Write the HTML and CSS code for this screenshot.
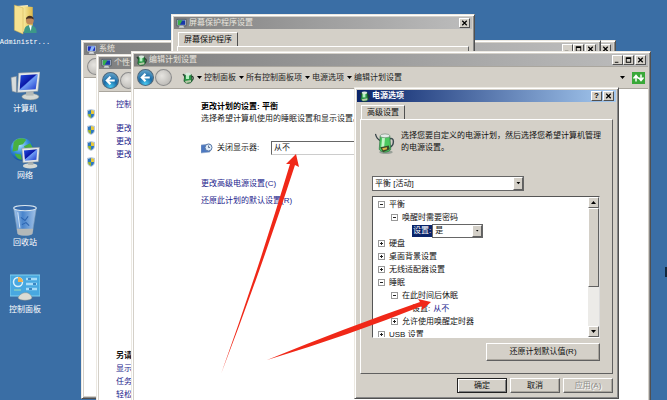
FILE: index.html
```html
<!DOCTYPE html>
<html lang="zh-CN">
<head>
  <meta charset="UTF-8">
  <meta name="viewport" content="width=device-width, initial-scale=1.0">
  <title>电源选项</title>
  <link rel="stylesheet" href="styles.css">
</head>
<body>
  <!-- Shared icons -->
  <svg class="defs" aria-hidden="true">
    <defs>
      <linearGradient id="screen" x1="0" y1="0" x2="1" y2="1">
        <stop offset="0" stop-color="#2450e0"/>
        <stop offset=".45" stop-color="#0a18a8"/>
        <stop offset=".5" stop-color="#6f9cf5"/>
        <stop offset="1" stop-color="#1733c8"/>
      </linearGradient>
      <linearGradient id="folder" x1="0" y1="0" x2="1" y2="0">
        <stop offset="0" stop-color="#fbf0a8"/>
        <stop offset="1" stop-color="#dcb848"/>
      </linearGradient>
      <radialGradient id="globe" cx=".4" cy=".3" r=".8">
        <stop offset="0" stop-color="#a8e4ff"/>
        <stop offset=".5" stop-color="#3088d8"/>
        <stop offset="1" stop-color="#0c3c88"/>
      </radialGradient>
      <radialGradient id="orb" cx=".5" cy=".9" r=".9">
        <stop offset="0" stop-color="#48c8f0"/>
        <stop offset=".5" stop-color="#1a6ca8"/>
        <stop offset="1" stop-color="#6aa8cc"/>
      </radialGradient>
      <radialGradient id="orb-off" cx=".4" cy=".4" r=".7">
        <stop offset="0" stop-color="#e6e4e0"/>
        <stop offset="1" stop-color="#b8b6b2"/>
      </radialGradient>
      <linearGradient id="glass" x1="0" y1="0" x2="1" y2="0">
        <stop offset="0" stop-color="#a8c8ec"/>
        <stop offset=".4" stop-color="#4884cc"/>
        <stop offset="1" stop-color="#a4c4e8"/>
      </linearGradient>
    </defs>
    <symbol id="i-monitor" viewBox="0 0 28 27">
      <path d="M1 5l5-1v15l-4-1z" fill="#d8dcdc" stroke="#7c8890" stroke-width=".5"/>
      <ellipse cx="19" cy="23" rx="8" ry="3" fill="#d4d8d4" stroke="#808888" stroke-width=".5"/>
      <path d="M15 17h7v5h-7z" fill="#b4bab8"/>
      <path d="M8 1l20-1-2 18-19 1z" fill="#e4e8e8" stroke="#8c9498" stroke-width=".5"/>
      <path d="M10 3l16-1-2 14-15 1z" fill="url(#screen)"/>
    </symbol>
    <symbol id="i-pc" viewBox="0 0 12 11">
      <path d="M1 1h10v7H1z" fill="#e8ecf0" stroke="#405060" stroke-width=".6"/>
      <path d="M2 2h8v5H2z" fill="#1a30c0"/>
      <path d="M6 2h4L7 7H4z" fill="#8cb4f8"/>
      <path d="M4 8h4l1 2H3z" fill="#d8dce0"/>
    </symbol>
    <symbol id="i-pc-green" viewBox="0 0 12 11">
      <path d="M1 1h10v7H1z" fill="#e8ecf0" stroke="#304050" stroke-width=".8"/>
      <path d="M2 2h8v5H2z" fill="#1838a8"/>
      <path d="M2 2h5L4 7H2z" fill="#38b048"/>
      <path d="M4 8h4l1 2H3z" fill="#c8d0d0"/>
    </symbol>
    <symbol id="i-power" viewBox="0 0 20 24">
      <ellipse cx="11" cy="21" rx="7" ry="2" fill="#98a098"/>
      <path d="M15 7c5-2 5 7 0 9" fill="none" stroke="#3c4c50" stroke-width="1.5"/>
      <path d="M0 2c1 4 3 6 5 7" fill="none" stroke="#384448" stroke-width="1.3"/>
      <path d="M5 4h10l1 14c-2 4-10 4-12 0z" fill="#4cc860" stroke="#2c7040" stroke-width=".7"/>
      <path d="M7 6h3l-1 11H6z" fill="#c4f4c8"/>
      <ellipse cx="10" cy="4" rx="5" ry="2" fill="#e4ece8" stroke="#688070" stroke-width=".6"/>
      <path d="M5 16l9-2 1 4-7 3z" fill="#394c2c"/>
      <path d="M7 17l5-1v2l-4 1z" fill="#dcb448"/>
    </symbol>
    <symbol id="i-power-small" viewBox="0 0 12 12">
      <path d="M1 2l2 3M9 4c3 0 3 4 0 5" fill="none" stroke="#203828" stroke-width="1.2"/>
      <path d="M3 2h6l1 7c-1 3-7 3-8 0z" fill="#2c9848" stroke="#184c28" stroke-width=".8"/>
      <path d="M4 3h3v4H4z" fill="#b4f0c0"/>
      <ellipse cx="6" cy="2" rx="3" ry="1.500" fill="#d8e8dc"/>
      <path d="M3 9l6-1v2l-5 1z" fill="#b8c8a8"/>
    </symbol>
    <symbol id="i-shield" viewBox="0 0 8 10">
      <path d="M4 0l4 1v4c0 3-2 4-4 5C2 9 0 8 0 5V1z" fill="#b8c8dc"/>
      <path d="M4 1v4H1V2z" fill="#2c78c0"/>
      <path d="M4 1v4h3V2z" fill="#e8c838"/>
      <path d="M4 5v4C2 8 1 7 1 5z" fill="#98b428"/>
      <path d="M4 5v4c2-1 3-2 3-4z" fill="#2c78c0"/>
    </symbol>
    <symbol id="i-back" viewBox="0 0 16 16">
      <circle cx="8" cy="8" r="7.5" fill="url(#orb)" stroke="#50687c"/>
      <path d="M12 8H5M8 4.500L4.500 8 8 11.500" fill="none" stroke="#fff" stroke-width="2"/>
    </symbol>
    <symbol id="i-forward" viewBox="0 0 16 16">
      <circle cx="8" cy="8" r="7.500" fill="url(#orb-off)" stroke="#8c8c8c"/>
    </symbol>
    <symbol id="i-min" viewBox="0 0 10 8"><path d="M2 6h4v1H2z"/></symbol>
    <symbol id="i-max" viewBox="0 0 10 8"><path d="M2 1h6v6H2zM3 3v3h4V3z" fill-rule="evenodd"/></symbol>
    <symbol id="i-close" viewBox="0 0 10 8"><path d="M2.500 1.500l5 5M7.500 1.500l-5 5" stroke="#000" stroke-width="1.300"/></symbol>
    <symbol id="i-down" viewBox="0 0 6 4"><path d="M1 0h5L3.500 3z"/></symbol>
    <symbol id="i-up" viewBox="0 0 6 4"><path d="M1 3h5L3.500 0z"/></symbol>
  </svg>

  <!-- Desktop icons -->
  <nav class="desktop">
    <a href="#admin" class="shortcut">
      <svg class="shortcut-icon" viewBox="0 0 28 32">
        <path d="M5 2l12-1v26H5z" fill="#f8ecc0"/>
        <path d="M11 2l11 1v23l-11 3z" fill="url(#folder)"/>
        <path d="M3 1l9 3v27l-9-4z" fill="#f6e290" stroke="#c8a848" stroke-width=".5"/>
        <circle cx="19" cy="17" r="4" fill="#c08858"/>
        <path d="M15 16c0-5 8-5 8 0l-2-1h-4z" fill="#443020"/>
        <path d="M13 30c0-6 2-8 6-8s7 2 7 8z" fill="#3c9888"/>
        <path d="M18 22h3l-1 6z" fill="#fff"/>
      </svg>
      <span class="latin">Administr...</span>
    </a>
    <a href="#computer" class="shortcut">
      <svg class="shortcut-icon"><use href="#i-monitor"/></svg>
      <span>计算机</span>
    </a>
    <a href="#network" class="shortcut">
      <svg class="shortcut-icon" viewBox="0 0 28 30">
        <circle cx="11" cy="11" r="11" fill="url(#globe)"/>
        <path d="M3 4c4-5 11-4 12-2l-3 4-4 1-1 5-5 1zM13 8l6-3 3 5-7 3zM4 15l6 1 1 5c-4 0-6-3-7-6z" fill="#48b040"/>
        <ellipse cx="19" cy="27" rx="7" ry="2.500" fill="#d4d8d4"/>
        <path d="M17 22h5v4h-5z" fill="#a8b0b0"/>
        <path d="M11 10l17-1-1 14-15 1z" fill="#e4e8e8" stroke="#808890" stroke-width=".5"/>
        <path d="M13 12l13-1-1 10-11 1z" fill="url(#screen)"/>
      </svg>
      <span>网络</span>
    </a>
    <a href="#recycle" class="shortcut">
      <svg class="shortcut-icon" viewBox="0 0 28 30">
        <path d="M3 3h22l-4 25c-3 2-11 2-14 0z" fill="url(#glass)" stroke="#7898b8" stroke-width=".6"/>
        <path d="M6 23h16l-1 5c-3 2-11 2-14 0z" fill="#b4b8b8"/>
        <ellipse cx="14" cy="3" rx="11" ry="2.500" fill="#3468a8" stroke="#dce8f0"/>
        <path d="M10 12l4 3 3-4M11 19l4-2 3 3" fill="none" stroke="#2c64b0"/>
        <path d="M7 7l2 15" stroke="#d0e4f8"/>
      </svg>
      <span>回收站</span>
    </a>
    <a href="#control" class="shortcut">
      <svg class="shortcut-icon" viewBox="0 0 30 27">
        <path d="M0 1h30v21H0z" fill="#48a8e0" stroke="#80d0f0"/>
        <circle cx="8" cy="8" r="4.500" fill="none" stroke="#d8f0fc" stroke-width="1.500"/>
        <path d="M8 8V3a5 5 0 0 1 5 5z" fill="#f0b050"/>
        <path d="M16 5h11M16 10h11M16 15h11" stroke="#a8dcf8" stroke-width="2.500"/>
        <path d="M18 5h3M23 10h3M19 15h3" stroke="#1868b0" stroke-width="1.500"/>
        <path d="M4 16h7" stroke="#a0e0b0"/>
        <path d="M8 24c2-6 12-8 14 0-2 3-12 3-14 0z" fill="#dcdcd4" stroke="#88908c" stroke-width=".5"/>
      </svg>
      <span>控制面板</span>
    </a>
  </nav>
  <div class="edge-mark"></div>

  <section class="window window-saver">
    <header class="titlebar">
      <svg class="title-icon"><use href="#i-pc-green"/></svg>
      <span class="title">屏幕保护程序设置</span>
      <button class="cap" aria-label="关闭"><svg><use href="#i-close"/></svg></button>
    </header>
    <div class="tabs"><button class="tab">屏幕保护程序</button></div>
    <div class="tab-panel"></div>
  </section>

  <section class="window window-back">
    <header class="titlebar">
      <span class="title"></span>
      <button class="cap" aria-label="关闭"><svg><use href="#i-close"/></svg></button>
    </header>
  </section>

  <section class="window window-system">
    <header class="titlebar">
      <svg class="title-icon"><use href="#i-pc"/></svg>
      <span class="title">系统</span>
      <button class="cap" aria-label="最小化"><svg><use href="#i-min"/></svg></button>
      <button class="cap" aria-label="最大化"><svg><use href="#i-max"/></svg></button>
      <button class="cap" aria-label="关闭"><svg><use href="#i-close"/></svg></button>
    </header>
    <div class="navbar">
      <svg class="orb"><use href="#i-forward"/></svg>
    </div>
    <div class="content shields">
      <svg><use href="#i-shield"/></svg>
      <svg><use href="#i-shield"/></svg>
      <svg><use href="#i-shield"/></svg>
      <svg><use href="#i-shield"/></svg>
    </div>
  </section>

  <section class="window window-personal">
    <header class="titlebar">
      <svg class="title-icon"><use href="#i-pc-green"/></svg>
      <span class="title">个性化</span>
    </header>
    <div class="navbar">
      <svg class="orb"><use href="#i-back"/></svg>
      <svg class="orb"><use href="#i-forward"/></svg>
    </div>
    <div class="content sidebar">
      <div class="side-links">
        <a href="#home" class="side-home">控制面板主页</a>
        <a href="#icons">更改桌面图标</a>
        <a href="#pointer">更改鼠标指针</a>
        <a href="#picture">更改帐户图片</a>
      </div>
      <div class="side-links">
        <strong>另请参阅</strong>
        <a href="#display">显示</a>
        <a href="#taskbar">任务栏</a>
        <a href="#ease">轻松访问中心</a>
      </div>
    </div>
  </section>

  <section class="window window-plan">
    <header class="titlebar">
      <svg class="title-icon"><use href="#i-power-small"/></svg>
      <span class="title">编辑计划设置</span>
      <button class="cap" aria-label="最小化"><svg><use href="#i-min"/></svg></button>
      <button class="cap" aria-label="最大化"><svg><use href="#i-max"/></svg></button>
      <button class="cap" aria-label="关闭"><svg><use href="#i-close"/></svg></button>
    </header>
    <div class="navbar">
      <svg class="orb"><use href="#i-back"/></svg>
      <svg class="orb"><use href="#i-forward"/></svg>
      <div class="address">
        <svg class="address-icon"><use href="#i-power-small"/></svg>
        <svg class="arrow"><use href="#i-down"/></svg>
        <a href="#cp">控制面板</a>
        <svg class="arrow"><use href="#i-down"/></svg>
        <a href="#all">所有控制面板项</a>
        <svg class="arrow"><use href="#i-down"/></svg>
        <a href="#power">电源选项</a>
        <svg class="arrow"><use href="#i-down"/></svg>
        <a href="#edit">编辑计划设置</a>
      </div>
      <svg class="arrow"><use href="#i-down"/></svg>
      <button class="refresh" aria-label="刷新">
        <svg viewBox="0 0 13 11"><path d="M4 9V4M1.500 6L4 3l2.500 3M9 2v5M6.500 5L9 8l2.500-3" fill="none" stroke="#fff" stroke-width="1.500"/></svg>
      </button>
    </div>
    <main class="content plan">
      <h1>更改计划的设置: 平衡</h1>
      <p>选择希望计算机使用的睡眠设置和显示设置。</p>
      <div class="plan-row">
        <svg class="plan-icon" viewBox="0 0 12 11">
          <path d="M0 2l9-1v8l-9 1z" fill="#4c78c0" stroke="#90a8c8" stroke-width=".6"/>
          <circle cx="7.500" cy="4.500" r="3.500" fill="#e0ecf8" stroke="#5878a8"/>
          <path d="M7.500 2.500v2H9" fill="none" stroke="#304870" stroke-width=".7"/>
        </svg>
        <label for="display-off">关闭显示器:</label>
        <select id="display-off"><option>从不</option></select>
      </div>
      <a href="#advanced">更改高级电源设置(C)</a>
      <a href="#restore">还原此计划的默认设置(R)</a>
    </main>
  </section>

  <section class="window window-dialog">
    <header class="titlebar active">
      <svg class="title-icon"><use href="#i-power-small"/></svg>
      <span class="title">电源选项</span>
      <button class="cap help" aria-label="帮助">?</button>
      <button class="cap" aria-label="关闭"><svg><use href="#i-close"/></svg></button>
    </header>
    <div class="tabs"><button class="tab">高级设置</button></div>
    <div class="tab-panel">
      <div class="intro">
        <svg class="intro-icon"><use href="#i-power"/></svg>
        <p>选择您要自定义的电源计划，然后选择您希望计算机管理的电源设置。</p>
      </div>
      <div class="combo plan-combo">
        <select aria-label="电源计划"><option>平衡 [活动]</option></select>
        <svg><use href="#i-down"/></svg>
      </div>
      <div class="tree-box">
        <ul class="tree">
          <li><button class="toggle open" aria-label="折叠"></button>平衡</li>
          <li class="level-2"><button class="toggle open" aria-label="折叠"></button>唤醒时需要密码</li>
          <li class="level-3">
            <label class="selected" for="wake">设置:</label>
            <div class="combo">
              <select id="wake"><option>是</option></select>
              <svg><use href="#i-down"/></svg>
            </div>
          </li>
          <li><button class="toggle" aria-label="展开"></button>硬盘</li>
          <li><button class="toggle" aria-label="展开"></button>桌面背景设置</li>
          <li><button class="toggle" aria-label="展开"></button>无线适配器设置</li>
          <li><button class="toggle open" aria-label="折叠"></button>睡眠</li>
          <li class="level-2"><button class="toggle open" aria-label="折叠"></button>在此时间后休眠</li>
          <li class="level-3"><span class="setting">设置:</span><a href="#never">从不</a></li>
          <li class="level-2"><button class="toggle" aria-label="展开"></button>允许使用唤醒定时器</li>
          <li><button class="toggle" aria-label="展开"></button>USB 设置</li>
        </ul>
        <div class="scrollbar">
          <button aria-label="向上"><svg><use href="#i-up"/></svg></button>
          <div class="thumb"></div>
          <button class="scroll-down" aria-label="向下"><svg><use href="#i-down"/></svg></button>
        </div>
      </div>
      <button class="btn restore">还原计划默认值(R)</button>
    </div>
    <footer class="buttons">
      <button class="btn default">确定</button>
      <button class="btn">取消</button>
      <button class="btn" disabled>应用(A)</button>
    </footer>
  </section>

  <!-- Red pointers drawn over the windows -->
  <svg class="pointers" width="667" height="400" viewBox="0 0 667 400">
    <path d="M221 374Q259 268 290 164l-4 0 10-10 3 13-4-2Q261 270 221 374z"/>
    <path d="M267 360Q345 328 420 302l-2-3 13 3-9 8 0-4Q350 335 267 360z"/>
  </svg>
</body>
</html>
```

FILE: styles.css
```css
* {
  box-sizing: border-box;
}

body {
  margin: 0;
  height: 100vh;
  position: relative;
  overflow: hidden;
  background: #3a6ea5;
  color: #111;
  font-family: 'Liberation Sans', 'Noto Sans CJK SC', sans-serif;
  font-size: 8px;
  line-height: 12px;
}

button, select {
  font: inherit;
  color: inherit;
  margin: 0;
  padding: 0;
  border-radius: 0;
}

select {
  appearance: none;
  background: #fff;
  border: 0;
  outline: 0;
}

a {
  color: #1c1c8c;
  text-decoration: none;
}

h1, p, ul {
  margin: 0;
  padding: 0;
}

svg {
  display: block;
  flex: none;
}

.defs {
  position: absolute;
  width: 0;
  height: 0;
}

/* Desktop */
.desktop {
  width: 50px;
  padding-top: 4px;
  display: flex;
  flex-direction: column;
}

.shortcut {
  height: 67px;
  display: flex;
  flex-direction: column;
  align-items: center;
  gap: 1px;
  color: #fff;
  white-space: nowrap;
}

.shortcut-icon {
  width: 30px;
  height: 31px;
}

.latin {
  font-family: 'Liberation Mono', monospace;
  font-size: 7px;
}

.edge-mark {
  position: absolute;
  right: 0;
  top: 267px;
  width: 2px;
  height: 10px;
  background: #102840;
}

/* Windows */
.window {
  position: absolute;
  display: flex;
  flex-direction: column;
  padding: 2px;
  background: #d4d0c8;
  border: 1px solid;
  border-color: #ece9e2 #505050 #505050 #ece9e2;
  box-shadow: inset 1px 1px #fff, inset -1px -1px #888;
  white-space: nowrap;
}

.window-saver {
  left: 171px;
  top: 14px;
  width: 304px;
  height: 200px;
  z-index: 1;
}

.window-back {
  left: 300px;
  top: 40px;
  width: 316px;
  height: 300px;
}

.window-system {
  left: 81px;
  top: 40px;
  width: 520px;
  bottom: 1px;
}

.window-personal {
  left: 96px;
  top: 54px;
  width: 500px;
  bottom: -4px;
  z-index: 2;
}

.window-plan {
  left: 131px;
  top: 51px;
  right: 16px;
  bottom: -4px;
  z-index: 2;
}

.window-dialog {
  left: 354px;
  top: 87px;
  width: 265px;
  z-index: 2;
}

.titlebar {
  display: flex;
  align-items: center;
  height: 12px;
  flex: none;
  padding: 0 2px;
  background: linear-gradient(to right, #808080, #bdbdbd);
  color: #e8e5de;
}

.titlebar.active {
  background: linear-gradient(to right, #0a246a, #a6caf0);
  color: #fff;
  font-weight: bold;
}

.title-icon {
  width: 11px;
  height: 11px;
  margin-right: 2px;
}

.title {
  flex: 1;
}

.cap {
  width: 11px;
  height: 10px;
  background: #d4d0c8;
  border: 1px solid;
  border-color: #fff #505050 #505050 #fff;
  color: #000;
  font-weight: bold;
  line-height: 8px;
}

.cap:last-child {
  margin-left: 1px;
}

.cap svg {
  width: 9px;
  height: 8px;
}

.navbar {
  display: flex;
  align-items: center;
  height: 23px;
  flex: none;
  padding: 0 3px;
  gap: 1px;
  border-bottom: 1px solid #aaa69e;
}

.window-plan .navbar {
  border-top: 1px solid #aaa69e;
}

.orb {
  width: 17px;
  height: 17px;
}

.address {
  flex: 1;
  display: flex;
  align-items: center;
  gap: 2px;
  margin-left: 9px;
}

.address a {
  color: #222;
}

.address-icon {
  width: 12px;
  height: 12px;
}

.arrow {
  width: 6px;
  height: 4px;
}

.refresh {
  width: 13px;
  height: 12px;
  margin-left: 6px;
  background: #38a838;
  border: 0;
}

.refresh svg {
  width: 13px;
  height: 12px;
}

.content {
  flex: 1;
  background: #fff;
}

/* System window */
.shields {
  display: flex;
  flex-direction: column;
  gap: 6px;
  padding: 31px 3px;
}

.shields svg {
  width: 8px;
  height: 10px;
}

/* Personalization window */
.sidebar {
  display: flex;
  flex-direction: column;
  justify-content: space-between;
  padding: 6px 17px 0;
}

.side-links {
  display: flex;
  flex-direction: column;
  line-height: 13px;
}

.side-home {
  margin-bottom: 11px;
}

/* Edit plan window */
.plan {
  display: flex;
  flex-direction: column;
  align-items: flex-start;
  padding: 11px 67px;
  color: #222;
}

.plan h1 {
  font-size: 8px;
  line-height: 13px;
  color: #000;
}

.plan a {
  margin-bottom: 5px;
}

.plan-row {
  display: flex;
  align-items: center;
  margin: 16px 0 23px;
}

.plan-icon {
  width: 12px;
  height: 11px;
  margin-right: 4px;
}

.plan-row label {
  width: 54px;
}

.plan-row select {
  width: 180px;
  height: 14px;
  padding-left: 2px;
  border: 1px solid #666;
  border-bottom-color: #ccc;
}

/* Tabs */
.tabs {
  padding: 3px 4px 0;
  display: flex;
}

.tab {
  height: 14px;
  padding: 0 5px;
  background: #d4d0c8;
  border: 1px solid;
  border-color: #fff #505050 #d4d0c8 #fff;
  border-bottom: 0;
}

.tab-panel {
  flex: 1;
  margin: 0 3px;
  padding: 12px 12px 12px 11px;
  display: flex;
  flex-direction: column;
  border: 1px solid;
  border-color: #fff #606060 #606060 #fff;
}

.intro {
  display: flex;
  gap: 6px;
  padding-left: 3px;
  height: 44px;
  white-space: normal;
}

.intro-icon {
  width: 20px;
  height: 23px;
}

.intro p {
  flex: none;
  width: 204px;
  margin-top: -2px;
}

/* Drop-downs */
.combo {
  display: flex;
  height: 14px;
  background: #fff;
  border: 1px solid #666;
}

.combo select {
  flex: 1;
  padding-left: 2px;
}

.combo svg {
  width: 10px;
  height: 12px;
  padding: 4px 1px;
  background: #d4d0c8;
  border: 1px solid;
  border-color: #fff #606060 #606060 #fff;
}

.plan-combo {
  width: 152px;
  height: 15px;
  margin-bottom: 5px;
}

.plan-combo svg {
  height: 13px;
}

/* Settings tree */
.tree-box {
  display: flex;
  height: 142px;
  overflow: hidden;
  background: #fff;
  border: 1px solid;
  border-color: #555 #ddd #fff #555;
}

.tree {
  flex: 1;
  list-style: none;
  padding: 1px 5px;
}

.tree li {
  display: flex;
  align-items: center;
  height: 13px;
}

.tree .level-2 {
  padding-left: 13px;
}

.tree .level-3 {
  padding-left: 34px;
}

.tree .combo {
  width: 51px;
}

.toggle {
  width: 7px;
  height: 7px;
  margin-right: 4px;
  border: 1px solid #999;
  background:
    linear-gradient(#222, #222) center / 3px 1px no-repeat,
    linear-gradient(#222, #222) center / 1px 3px no-repeat,
    #fff;
}

.toggle.open {
  background: linear-gradient(#222, #222) center / 3px 1px no-repeat, #fff;
}

.selected {
  padding: 0 1px;
  background: #0a246a;
  color: #fff;
}

.setting {
  margin-right: 3px;
}

.scrollbar {
  width: 11px;
  display: flex;
  flex-direction: column;
  background: #ecebe8;
}

.scrollbar button, .thumb {
  background: #d4d0c8;
  border: 1px solid;
  border-color: #fff #606060 #606060 #fff;
}

.scrollbar button {
  height: 11px;
  padding: 2px 1px;
}

.scrollbar svg {
  width: 6px;
  height: 4px;
}

.thumb {
  height: 79px;
}

.scroll-down {
  margin-top: auto;
}

/* Buttons */
.btn {
  width: 50px;
  height: 15px;
  background: #d4d0c8;
  border: 1px solid;
  border-color: #fff #606060 #606060 #fff;
  box-shadow: inset -1px -1px #aaa69e;
}

.btn.default {
  border-color: #222;
  box-shadow: inset 1px 1px #fff, inset -1px -1px #808080;
}

.btn:disabled {
  color: #8c8c88;
  text-shadow: 1px 1px #fff;
}

.restore {
  width: 114px;
  height: 18px;
  margin-top: 5px;
  align-self: flex-end;
}

.buttons {
  display: flex;
  justify-content: flex-end;
  gap: 3px;
  padding: 4px 3px 3px;
}

.pointers {
  position: absolute;
  left: 0;
  top: 0;
  z-index: 3;
  fill: #f02818;
  pointer-events: none;
}
```
